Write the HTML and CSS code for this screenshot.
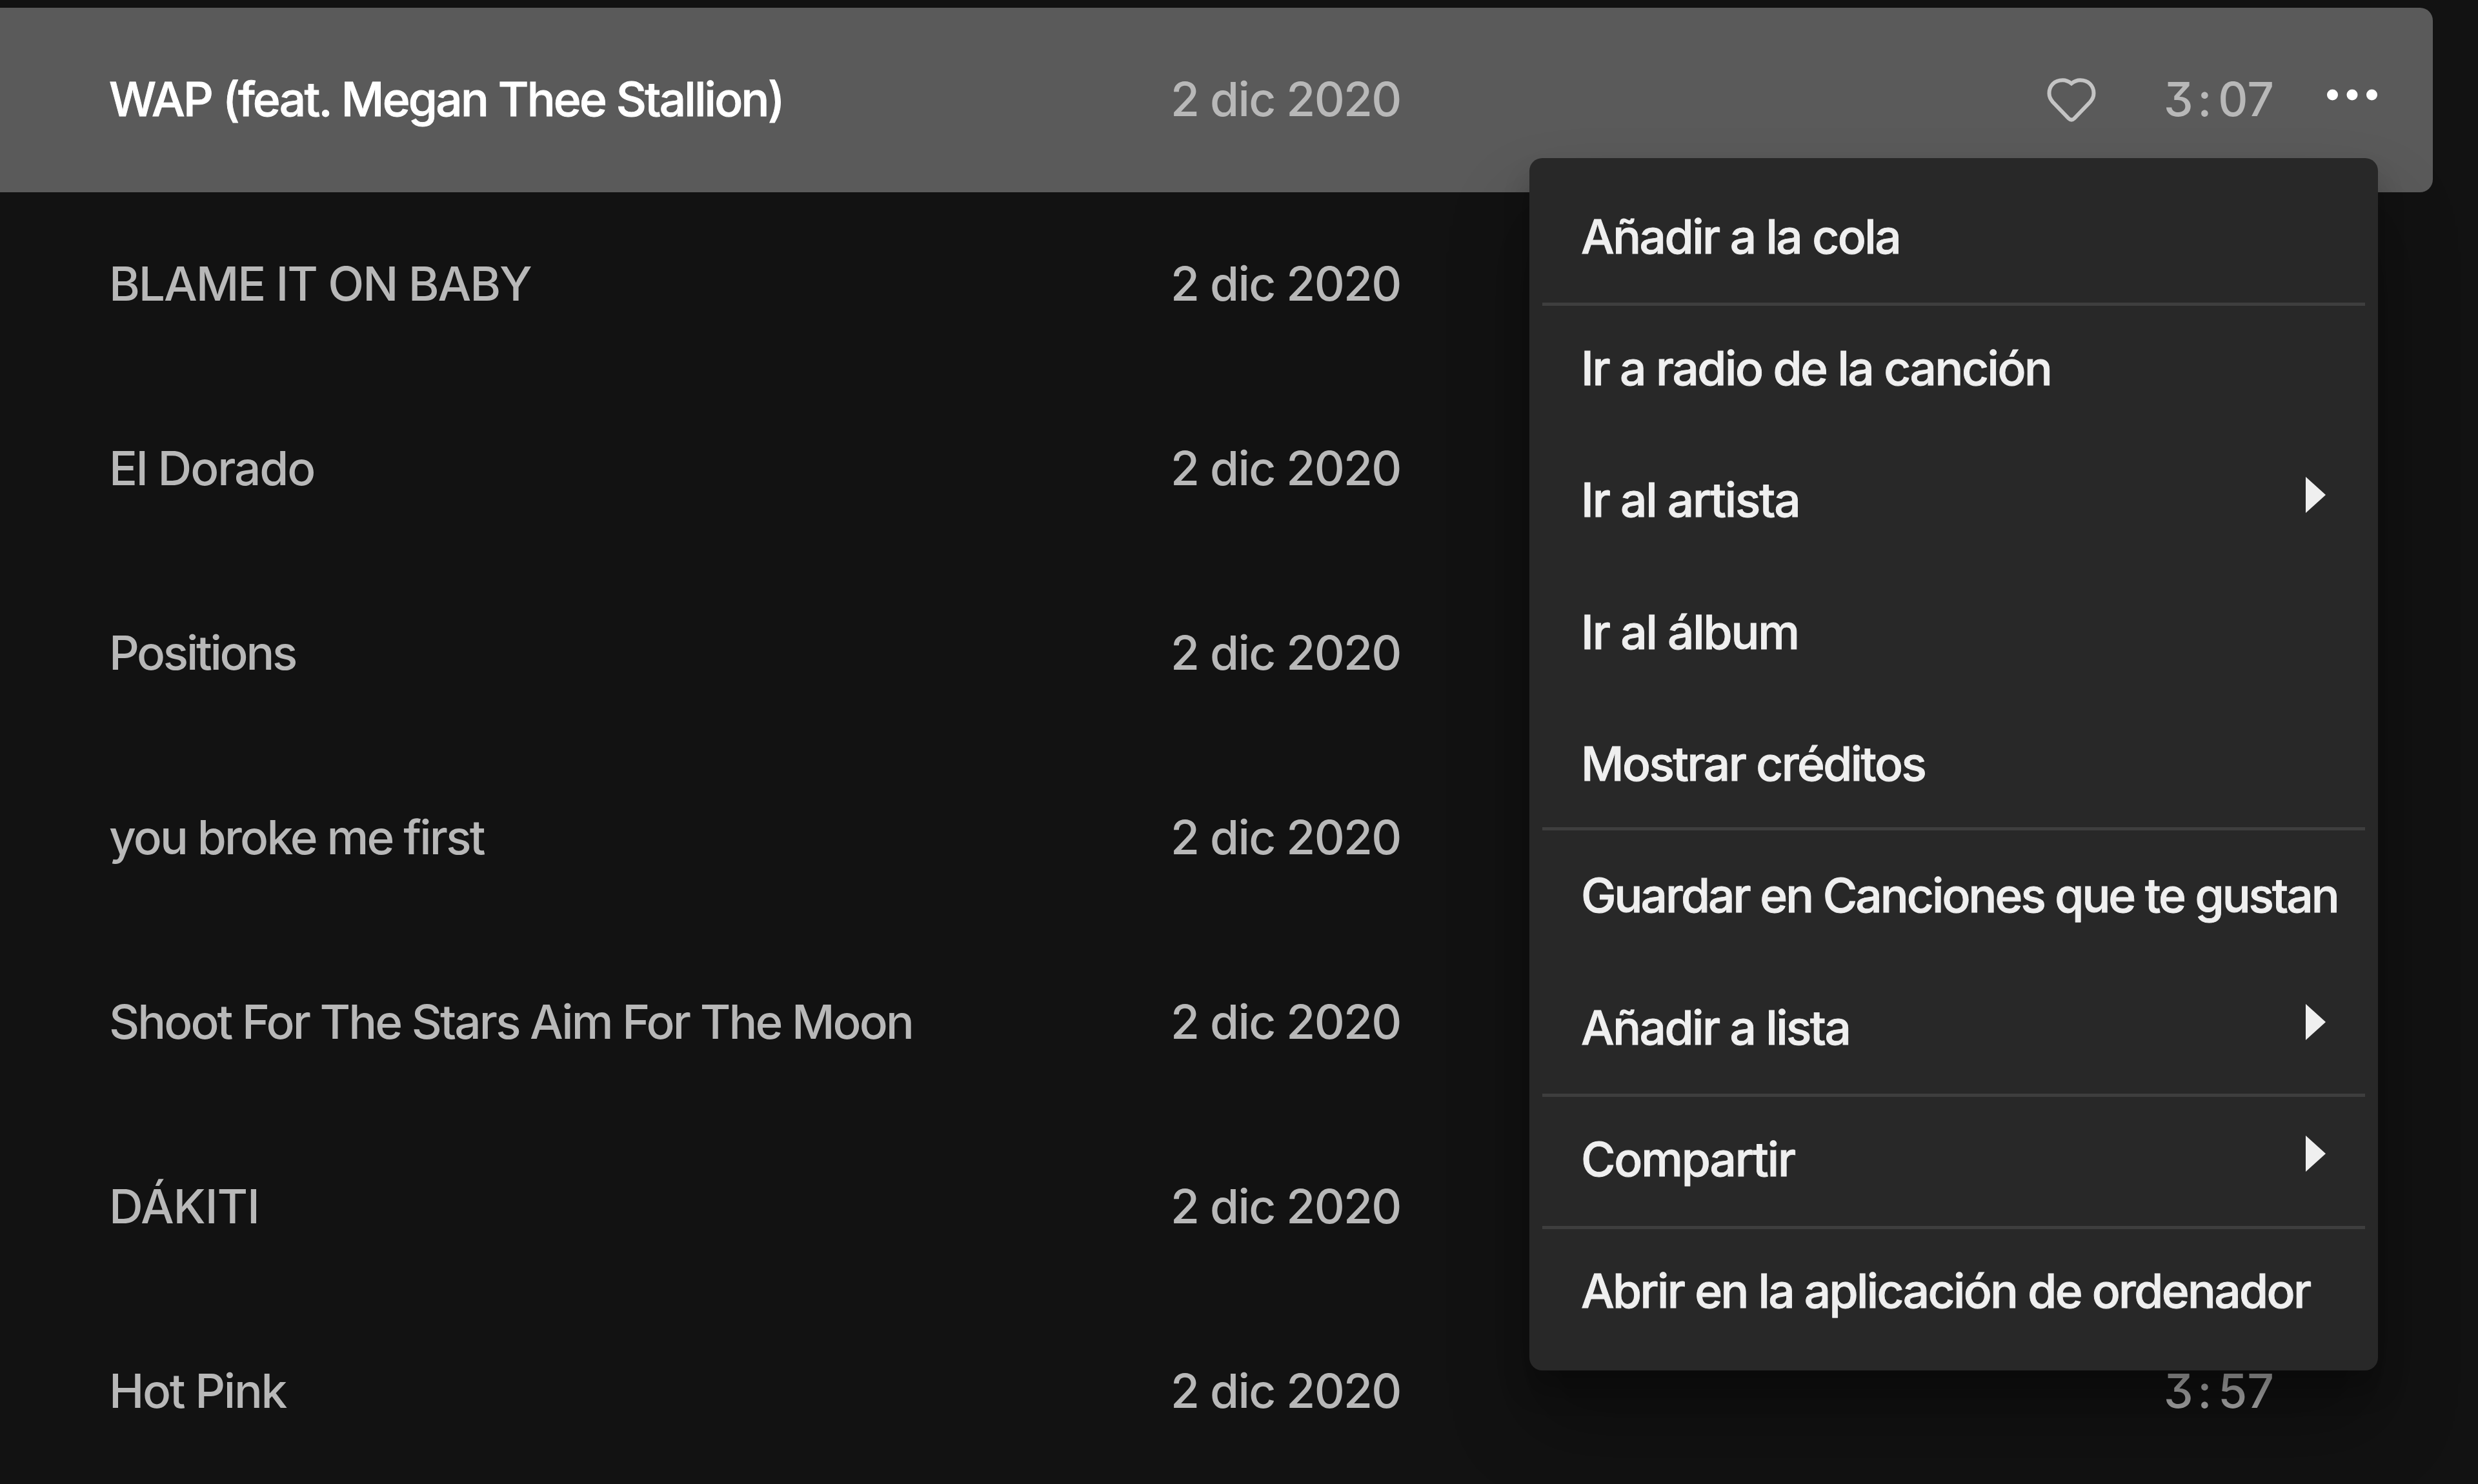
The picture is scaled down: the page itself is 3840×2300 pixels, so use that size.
FILE: index.html
```html
<!DOCTYPE html>
<html lang="es">
<head>
<meta charset="utf-8">
<title>Lista de canciones</title>
<link rel="stylesheet" href="styles.css">
</head>
<body>
<main class="tracks">
  <div class="track track--active">
    <span class="album t-wap">WAP (feat. Megan Thee Stallion)</span>
    <span class="date">2 dic 2020</span>
    <svg class="heart" viewBox="0 0 84 78"><path d="M41 11.500C36 7.500 32 6.300 27.500 6.300C14.500 6.300 6.500 15 6.500 26.500C6.500 32 8.500 36 12 40L36.500 65.500Q41 70 45.500 65.500L70 40C73.500 36 75.500 32 75.500 26.500C75.500 15 67.500 6.300 54.500 6.300C50 6.300 46 7.500 41 11.500Z"/></svg>
    <span class="time">3<span class="colon">:</span>07</span>
    <svg class="dots" viewBox="0 0 80 18"><circle cx="9.500" cy="9" r="8.500"/><circle cx="40" cy="9" r="8.500"/><circle cx="70.500" cy="9" r="8.500"/></svg>
  </div>
  <div class="track"><span class="album t-blame">BLAME IT ON BABY</span><span class="date">2 dic 2020</span></div>
  <div class="track"><span class="album t-dorado">El Dorado</span><span class="date">2 dic 2020</span></div>
  <div class="track"><span class="album t-positions">Positions</span><span class="date">2 dic 2020</span></div>
  <div class="track"><span class="album t-broke">you broke me first</span><span class="date">2 dic 2020</span></div>
  <div class="track"><span class="album t-shoot">Shoot For The Stars Aim For The Moon</span><span class="date">2 dic 2020</span></div>
  <div class="track"><span class="album t-dakiti">DÁKITI</span><span class="date">2 dic 2020</span></div>
  <div class="track"><span class="album t-pink">Hot Pink</span><span class="date">2 dic 2020</span><span></span><span class="time">3<span class="colon">:</span>57</span></div>
</main>
<nav class="menu">
  <div class="item m-cola">Añadir a la cola</div>
  <div class="item item--line-top m-radio">Ir a radio de la canción</div>
  <div class="item m-artista">Ir al artista<svg class="arrow" viewBox="0 0 31 56"><path d="M0 0L31 28L0 56Z"/></svg></div>
  <div class="item m-album">Ir al álbum</div>
  <div class="item item--line-bottom m-creditos">Mostrar créditos</div>
  <div class="item m-guardar">Guardar en Canciones que te gustan</div>
  <div class="item m-lista">Añadir a lista<svg class="arrow" viewBox="0 0 31 56"><path d="M0 0L31 28L0 56Z"/></svg></div>
  <div class="item item--line-top m-compartir">Compartir<svg class="arrow" viewBox="0 0 31 56"><path d="M0 0L31 28L0 56Z"/></svg></div>
  <div class="item item--line-top m-abrir">Abrir en la aplicación de ordenador</div>
</nav>
</body>
</html>
```
FILE: styles.css
```css
* { box-sizing: border-box; }

html, body { height: 100%; }

body {
  margin: 0;
  overflow: hidden;
  position: relative;
  background: #121212;
  font-family: Inter, "Liberation Sans", sans-serif;
  font-size: 73px;
  font-weight: 500;
  line-height: 88px;
  color: #b8b8b8;
  white-space: nowrap;
}

.tracks { padding-top: 12px; width: 3770px; }

.track {
  display: grid;
  grid-template-columns: 1645px 1355px 184px 252px auto;
  align-items: center;
  height: 286px;
  padding: 0 0 2px 169px;
}

.track--active {
  background: #5a5a5a;
  border-radius: 0 20px 20px 0;
}

.date { letter-spacing: -1.7px; }

.time {
  font-feature-settings: "tnum", "cv09";
  letter-spacing: -4.6px;
}

.colon {
  display: inline-block;
  width: 41px;
  letter-spacing: 0;
  text-align: center;
}

.heart {
  width: 84px;
  height: 78px;
  margin-top: 5px;
  fill: none;
  stroke: #c4c4c4;
  stroke-width: 6;
}

.dots {
  width: 80px;
  height: 18px;
  margin-bottom: 14px;
  fill: #fff;
}

/* Context menu floating over the list */
.menu {
  position: absolute;
  left: 2370px;
  top: 245px;
  width: 1315px;
  height: 1879px;
  padding: 20px;
  display: grid;
  grid-template-columns: minmax(0, 1fr);
  grid-template-rows: repeat(9, 1fr);
  background: #282828;
  border-radius: 20px;
  box-shadow: 0 82px 123px rgba(0, 0, 0, .3), 0 31px 41px rgba(0, 0, 0, .2);
  color: #efefef;
  -webkit-text-stroke: .9px #efefef;
}

.item {
  display: flex;
  align-items: center;
  justify-content: space-between;
  padding: 0 61px 1px 60px;
  border: 0 solid #3e3e3e;
}

.item--line-top { border-top-width: 5px; padding-bottom: 6px; }
.item--line-bottom { border-bottom-width: 5px; padding-bottom: 0; padding-top: 4px; }

.arrow {
  flex: none;
  width: 31px;
  height: 56px;
  margin-bottom: 17px;
  fill: #efefef;
}

/* Tracking of the individual labels */
.t-wap { color: #fff; -webkit-text-stroke: .9px #fff; letter-spacing: -2.76px; }
.t-blame { letter-spacing: -2.09px; }
.t-dorado { letter-spacing: -2.1px; }
.t-positions { letter-spacing: -3.3px; }
.t-broke { letter-spacing: -2.82px; }
.t-shoot { letter-spacing: -2.92px; }
.t-dakiti { letter-spacing: -1.1px; }
.t-pink { letter-spacing: -2.35px; }
.m-cola { letter-spacing: -2.53px; }
.m-radio { letter-spacing: -2.5px; }
.m-artista { letter-spacing: -2.2px; }
.m-album { letter-spacing: -2.15px; }
.m-creditos { letter-spacing: -2.6px; }
.m-guardar { letter-spacing: -2.96px; }
.m-lista { letter-spacing: -2.55px; }
.m-compartir { letter-spacing: -2.2px; }
.m-abrir { letter-spacing: -2.66px; }
```
